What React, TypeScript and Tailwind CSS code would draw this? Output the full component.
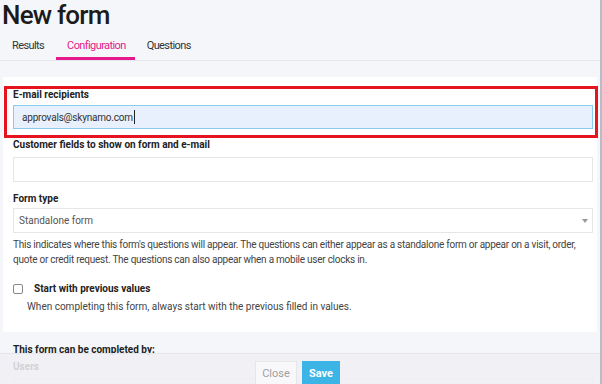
import React from 'react';

export default function App() {
  return (
    <div className="relative w-[602px] h-[384px] overflow-hidden bg-[#f5f6fa] font-['Roboto','Liberation_Sans',sans-serif] text-[#222]">
      {/* Title */}
      <h1 className="pl-[2px] pt-[1px] text-[26px] leading-[28px] font-medium tracking-[-0.8px] text-[#1b1b1b]">New form</h1>

      {/* Tabs */}
      <div className="mt-[6px] flex h-[26px] border-b border-[#e4e6eb] pl-[12px] text-[11px] tracking-[-0.6px]">
        <div className="pt-[3px] text-[#333]">Results</div>
        <div className="ml-[12px] border-b-[3px] border-[#e5198b] pl-[11px] pr-[9px] pt-[3px] text-[#e5198b]">Configuration</div>
        <div className="ml-[12px] pt-[3px] text-[#333]">Questions</div>
      </div>

      {/* Panel */}
      <div className="ml-[3px] mt-[16px] w-[594px] bg-white pl-[10px] pr-[4px] pt-[11px] pb-[18px]">
        <div className="text-[10px] font-bold leading-[14px]">E-mail recipients</div>
        <div className="mt-[3px] flex h-[24px] items-center border border-[#88cdec] bg-[#e8f0fe] pl-[8px] text-[10px] tracking-[-0.2px] text-[#333]">
          approvals@skynamo.com<span className="ml-[1px] h-[14px] w-px bg-[#222]" />
        </div>

        <div className="mt-[9px] text-[10px] font-bold leading-[14px]">Customer fields to show on form and e-mail</div>
        <div className="mt-[5px] h-[25px] border border-[#e6e6e6]" />

        <div className="mt-[10px] text-[10px] font-bold leading-[14px]">Form type</div>
        <div className="mt-[2px] flex h-[25px] items-center justify-between border border-[#e6e6e6] pl-[5px] pr-[4px] text-[10px] text-[#555]">
          <span>Standalone form</span>
          <svg width="6" height="4" viewBox="0 0 6 4"><path d="M0 0h6L3 4z" fill="#999" /></svg>
        </div>
        <p className="mt-[4px] text-[10px] leading-[15px] tracking-[-0.25px] text-[#444]">
          This indicates where this form's questions will appear. The questions can either appear as a standalone form or appear on a visit, order, quote or credit request. The questions can also appear when a mobile user clocks in.
        </p>

        <div className="mt-[15px] flex items-center">
          <span className="h-[10px] w-[10px] rounded-[2px] border border-[#888] bg-white" />
          <span className="ml-[11px] text-[10px] font-bold leading-[14px]">Start with previous values</span>
        </div>
        <div className="mt-[4px] pl-[14px] text-[10px] leading-[14px] text-[#444]">
          When completing this form, always start with the previous filled in values.
        </div>
      </div>

      {/* Grey section */}
      <div className="pl-[13px] pt-[11px]">
        <div className="text-[10px] font-bold leading-[14px]">This form can be completed by:</div>
        <div className="mt-[3px] text-[10px] font-bold leading-[14px] text-[#222]">Users</div>
        <div className="mt-[4px] mr-[9px] h-[20px] border border-[#e6e6e6] bg-white" />
      </div>

      {/* Red annotation box */}
      <div className="absolute left-[4px] top-[86px] h-[52px] w-[594px] border-[3px] border-[#e5141f]" />

      {/* Footer overlay */}
      <div className="absolute left-0 right-0 top-[353px] bottom-0 border-t border-[#e6e6ea] bg-[#efeff3]/85">
        <div className="flex justify-center gap-[5px] pr-[7px] pt-[7px]">
          <button className="h-[26px] w-[42px] border border-[#e6e6e6] bg-[#f8f8fa] text-[11px] text-[#a0a0a0]">Close</button>
          <button className="h-[26px] w-[38px] bg-[#3cb4e6] text-[11px] font-bold text-white">Save</button>
        </div>
      </div>

      {/* Scrollbar */}
      <div className="absolute right-0 top-0 h-full w-[2px] bg-[#b9bdc8]" />
    </div>
  );
}
